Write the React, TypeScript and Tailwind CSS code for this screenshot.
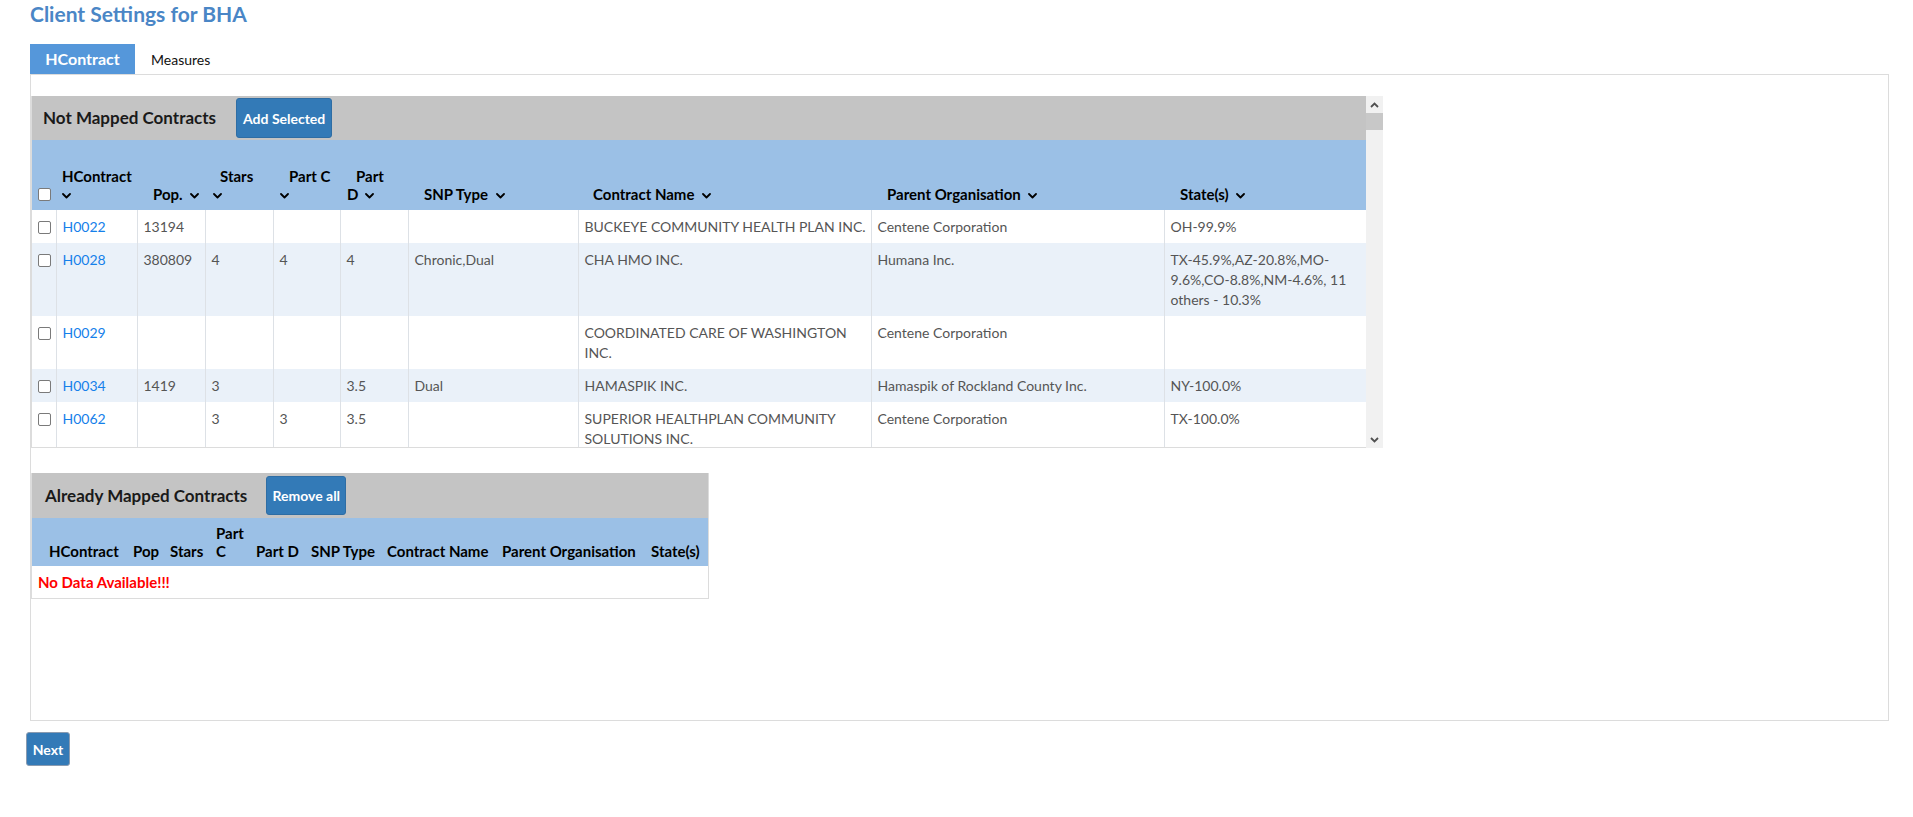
import React from "react";

function Chevron() {
  return (
    <svg width="9" height="6" viewBox="0 0 9 6" className="inline-block align-middle" fill="none">
      <path d="M1 1l3.5 3.5L8 1" stroke="currentColor" strokeWidth="1.8" strokeLinecap="round" strokeLinejoin="round" />
    </svg>
  );
}

function Box() {
  return <span className="block h-[13px] w-[13px] rounded-[2px] border-[1.5px] border-[#7a7a7a] bg-white" />;
}

type Row = {
  id: string;
  pop: string;
  stars: string;
  partC: string;
  partD: string;
  snp: string;
  name: string;
  parent: string;
  states: string;
};

const rows: Row[] = [
  { id: "H0022", pop: "13194", stars: "", partC: "", partD: "", snp: "", name: "BUCKEYE COMMUNITY HEALTH PLAN INC.", parent: "Centene Corporation", states: "OH-99.9%" },
  { id: "H0028", pop: "380809", stars: "4", partC: "4", partD: "4", snp: "Chronic,Dual", name: "CHA HMO INC.", parent: "Humana Inc.", states: "TX-45.9%,AZ-20.8%,MO-9.6%,CO-8.8%,NM-4.6%, 11 others - 10.3%" },
  { id: "H0029", pop: "", stars: "", partC: "", partD: "", snp: "", name: "COORDINATED CARE OF WASHINGTON INC.", parent: "Centene Corporation", states: "" },
  { id: "H0034", pop: "1419", stars: "3", partC: "", partD: "3.5", snp: "Dual", name: "HAMASPIK INC.", parent: "Hamaspik of Rockland County Inc.", states: "NY-100.0%" },
  { id: "H0062", pop: "", stars: "3", partC: "3", partD: "3.5", snp: "", name: "SUPERIOR HEALTHPLAN COMMUNITY SOLUTIONS INC.", parent: "Centene Corporation", states: "TX-100.0%" },
];

const td = "align-top border-l border-[#dde1e6] pl-[6px] pr-[2px] pt-[7px] pb-[6px] leading-5";

export default function App() {
  return (
    <div className="min-h-[817px] bg-white font-[Lato,'Liberation_Sans',sans-serif] text-[14px] text-[#333]">
      <div className="pl-[30px]">
        <h1 className="h-[28px] text-[21px] font-bold leading-[28px] text-[#4a86c6]">Client Settings for BHA</h1>

        <div className="mt-[16px] flex h-[30px] items-center">
          <div className="flex h-[30px] w-[105px] items-center justify-center bg-[#5597da] text-[16px] font-bold text-white">HContract</div>
          <div className="pl-[16px] text-[14px] text-[#111]">Measures</div>
        </div>

        <div className="h-[647px] w-[1859px] border border-[#dcdcdc] pt-[21px]">
          {/* Not mapped */}
          <div className="flex h-[352px]">
            <div className="w-[1335px] overflow-hidden border-b border-l border-[#dcdcdc]">
              <div className="flex h-[44px] items-center bg-[#c4c4c4] pl-[11px]">
                <span className="text-[17px] font-bold text-[#1a1a1a]">Not Mapped Contracts</span>
                <button className="ml-[20px] h-[40px] rounded-[3px] border border-[#2e6da4] bg-[#337ab7] px-[6px] text-[14px] font-bold text-white">Add Selected</button>
              </div>
              <table className="w-[1334px] table-fixed border-collapse">
                <colgroup>
                  <col className="w-[24px]" />
                  <col className="w-[81px]" />
                  <col className="w-[68px]" />
                  <col className="w-[68px]" />
                  <col className="w-[67px]" />
                  <col className="w-[68px]" />
                  <col className="w-[170px]" />
                  <col className="w-[293px]" />
                  <col className="w-[293px]" />
                  <col className="w-[202px]" />
                </colgroup>
                <thead>
                  <tr className="h-[70px] whitespace-nowrap bg-[#9bc0e6] text-left text-[15px] font-bold leading-[18px] text-black">
                    <th className="pb-[7px] pl-[6px] align-bottom">
                      <div className="flex h-[18px] items-center">
                        <Box />
                      </div>
                    </th>
                    <th className="pb-[7px] pl-[6px] align-bottom">
                      HContract
                      <br />
                      <Chevron />
                    </th>
                    <th className="pb-[7px] pl-[16px] align-bottom">
                      Pop. <span className="ml-[4px]"><Chevron /></span>
                    </th>
                    <th className="pb-[7px] pl-[8px] align-bottom">
                      <span className="pl-[7px]">Stars</span>
                      <br />
                      <Chevron />
                    </th>
                    <th className="pb-[7px] pl-[7px] align-bottom">
                      <span className="pl-[9px]">Part C</span>
                      <br />
                      <Chevron />
                    </th>
                    <th className="pb-[7px] pl-[7px] align-bottom">
                      <span className="pl-[9px]">Part</span>
                      <br />
                      D <span className="ml-[3px]"><Chevron /></span>
                    </th>
                    <th className="pb-[7px] pl-[16px] align-bottom">
                      SNP Type <span className="ml-[4px]"><Chevron /></span>
                    </th>
                    <th className="pb-[7px] pl-[15px] align-bottom">
                      Contract Name <span className="ml-[4px]"><Chevron /></span>
                    </th>
                    <th className="pb-[7px] pl-[16px] align-bottom">
                      Parent Organisation <span className="ml-[4px]"><Chevron /></span>
                    </th>
                    <th className="pb-[7px] pl-[16px] align-bottom">
                      State(s) <span className="ml-[4px]"><Chevron /></span>
                    </th>
                  </tr>
                </thead>
                <tbody className="text-[14px] text-[#555]">
                  {rows.map((r, i) => (
                    <tr key={r.id} className={i % 2 === 1 ? "bg-[#eaf1f9]" : "bg-white"}>
                      <td className="pl-[6px] pt-[7px] align-top">
                        <div className="flex h-5 items-center">
                          <Box />
                        </div>
                      </td>
                      <td className={td}>
                        <a className="text-[#1580ea]">{r.id}</a>
                      </td>
                      <td className={td}>{r.pop}</td>
                      <td className={td}>{r.stars}</td>
                      <td className={td}>{r.partC}</td>
                      <td className={td}>{r.partD}</td>
                      <td className={td}>{r.snp}</td>
                      <td className={td}>{r.name}</td>
                      <td className={td}>{r.parent}</td>
                      <td className={td}>{r.states}</td>
                    </tr>
                  ))}
                </tbody>
              </table>
            </div>
            <div className="flex w-[17px] flex-col bg-[#f1f1f1]">
              <div className="flex h-[17px] items-center justify-center text-[#505050]">
                <svg width="9" height="6" viewBox="0 0 9 6" fill="none">
                  <path d="M1 5l3.5-3.5L8 5" stroke="currentColor" strokeWidth="1.8" />
                </svg>
              </div>
              <div className="h-[17px] bg-[#c8c8c8]" />
              <div className="flex-1" />
              <div className="flex h-[17px] items-center justify-center text-[#505050]">
                <svg width="9" height="6" viewBox="0 0 9 6" fill="none">
                  <path d="M1 1l3.5 3.5L8 1" stroke="currentColor" strokeWidth="1.8" />
                </svg>
              </div>
            </div>
          </div>

          {/* Already mapped */}
          <div className="mt-[25px] w-[678px] border-b border-l border-r border-[#dcdcdc]">
            <div className="flex h-[45px] items-center bg-[#c4c4c4] pl-[13px]">
              <span className="text-[17px] font-bold text-[#1a1a1a]">Already Mapped Contracts</span>
              <button className="ml-[19px] h-[39px] w-[80px] rounded-[3px] border border-[#2e6da4] bg-[#337ab7] text-[14px] font-bold text-white">Remove all</button>
            </div>
            <div className="grid h-[48px] grid-cols-[93px_37px_46px_40px_55px_76px_115px_149px_67px] items-end whitespace-nowrap bg-[#9bc0e6] pb-[6px] text-[15px] font-bold leading-[18px] text-black">
              <div className="pl-[17px]">HContract</div>
              <div className="pl-[8px]">Pop</div>
              <div className="pl-[8px]">Stars</div>
              <div className="pl-[8px]">
                Part
                <br />C
              </div>
              <div className="pl-[8px]">Part D</div>
              <div className="pl-[8px]">SNP Type</div>
              <div className="pl-[8px]">Contract Name</div>
              <div className="pl-[8px]">Parent Organisation</div>
              <div className="pl-[8px]">State(s)</div>
            </div>
            <div className="flex h-[32px] items-center pl-[6px] text-[15px] font-bold text-[#ff0000]">No Data Available!!!</div>
          </div>
        </div>
      </div>

      <div className="ml-[26px] mt-[11px]">
        <button className="h-[34px] w-[44px] rounded-[3px] border border-[#8a9bb0] bg-[#337ab7] text-[14px] font-bold text-white">Next</button>
      </div>
    </div>
  );
}
